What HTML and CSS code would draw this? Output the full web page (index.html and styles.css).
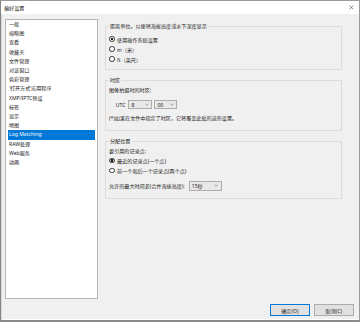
FILE: index.html
```html
<!DOCTYPE html>
<html lang="zh-CN">

<head>
    <meta charset="utf-8">
    <title>偏好设置</title>
    <link rel="stylesheet" href="styles.css">
</head>

<body>
    <div class="dialog">
        <div class="titlebar">
            <span class="title">偏好设置</span>
            <svg class="close" width="5" height="5" viewBox="0 0 5 5">
                <path d="M0.6 0.6L4.4 4.4M4.4 0.6L0.6 4.4" stroke="#444" stroke-width="0.6" fill="none" />
            </svg>
        </div>

        <div class="main">
            <ul class="nav">
                <li>一般</li>
                <li>缩略图</li>
                <li>查看</li>
                <li>收藏夹</li>
                <li>文件管理</li>
                <li>对该窗口</li>
                <li>色彩管理</li>
                <li>‘打开方式’应用程序</li>
                <li>XMP/IPTC预设</li>
                <li>标签</li>
                <li>显示</li>
                <li>地图</li>
                <li class="valgt">Log Matching</li>
                <li>RAW处理</li>
                <li>Web服务</li>
                <li>动画</li>
            </ul>

            <div class="panel">
                <fieldset class="group g1">
                    <legend>距离单位。以便将海拔高度或水下深度显示</legend>
                    <div class="radio"><span class="dot on"></span>使用操作系统设置</div>
                    <div class="radio"><span class="dot"></span>m（米）</div>
                    <div class="radio"><span class="dot"></span>ft（英尺）</div>
                </fieldset>

                <fieldset class="group g2">
                    <legend>时区</legend>
                    <div class="row">图像拍摄时的时区:</div>
                    <div class="utc">
                        <span class="utc-label">UTC</span>
                        <div class="combo c-hour"><span>8</span><svg width="4" height="3" viewBox="0 0 4 3"><path d="M0.3 0.6L2 2.3L3.7 0.6" stroke="#555" stroke-width="0.5" fill="none" /></svg></div>
                        <div class="combo c-min"><span>00</span><svg width="4" height="3" viewBox="0 0 4 3"><path d="M0.3 0.6L2 2.3L3.7 0.6" stroke="#555" stroke-width="0.5" fill="none" /></svg></div>
                    </div>
                    <div class="row note">(*)如果在文件中指定了时区，它将覆盖此处的这些设置。</div>
                </fieldset>

                <fieldset class="group g3">
                    <legend>分配位置</legend>
                    <div class="row">要引用的记录点:</div>
                    <div class="radio"><span class="dot on"></span>最近的记录点(一个点)</div>
                    <div class="radio"><span class="dot"></span>前一个和后一个记录点(两个点)</div>
                    <div class="wait">
                        <span>允许的最大时间差(合并海拔高度):</span>
                        <div class="combo c-sec"><span>15秒</span><svg width="4" height="3" viewBox="0 0 4 3"><path d="M0.3 0.6L2 2.3L3.7 0.6" stroke="#555" stroke-width="0.5" fill="none" /></svg></div>
                    </div>
                </fieldset>
            </div>
        </div>

        <div class="buttons">
            <button class="btn default">确定(O)</button>
            <button class="btn">取消(C)</button>
        </div>
    </div>
</body>

</html>
```

FILE: styles.css
```css
* {
    margin: 0;
    padding: 0;
    box-sizing: border-box;
}

body {
    background-color: #f0f0f0;
    font-family: "Noto Sans", "Noto Sans CJK SC", sans-serif;
    font-size: 5.1px;
    color: #1a1a1a;
}

.dialog {
    width: 360px;
    height: 322px;
    display: flex;
    flex-direction: column;
    background-color: #f0f0f0;
    border-top: 1px solid #9a9a9a;
    border-left: 1px solid #858585;
    border-right: 1px solid #9a9a9a;
    border-bottom: 2px solid #8a8a8a;
    box-shadow: inset 1px 0 #d8d8d8, inset 0 -1px #ffffff;
}

.titlebar {
    height: 13px;
    background-color: #ffffff;
    display: flex;
    align-items: center;
    justify-content: space-between;
    padding-left: 3px;
    padding-right: 5px;
}

.close {
    display: block;
}

.main {
    display: flex;
    padding: 5px 0 0 4px;
    height: 285px;
}

.nav {
    list-style: none;
    width: 93px;
    height: 280px;
    background-color: #ffffff;
    border: 1px solid #b4b4b4;
    line-height: 9.2px;
}

.nav li {
    margin: 0 2px;
    padding: 0 1px;
    white-space: nowrap;
}

.valgt {
    background-color: #0078d7;
    color: #ffffff;
}

.panel {
    width: 237px;
    margin-left: 7px;
    padding-top: 4px;
}

.group {
    border: 1px solid #dcdcdc;
    padding: 0 3px;
}

.group legend {
    line-height: 6px;
    padding: 0 1px;
}

.g1 {
    padding-top: 5px;
    padding-bottom: 5px;
}

.g2 {
    margin-top: 7px;
    padding-top: 3px;
    padding-bottom: 7px;
}

.g3 {
    margin-top: 7px;
    padding-top: 2.5px;
    padding-bottom: 7px;
}

.radio {
    display: flex;
    align-items: center;
    gap: 2.5px;
    height: 10px;
}

.dot {
    width: 5.6px;
    height: 5.6px;
    border: 0.7px solid #333333;
    border-radius: 50%;
    background-color: #ffffff;
}

.dot.on {
    background: radial-gradient(circle, #222222 0 1.3px, #ffffff 1.6px);
}

.row {
    line-height: 9px;
}

.utc {
    display: flex;
    align-items: center;
    height: 9px;
    margin-top: 5px;
    padding-left: 6.7px;
}

.utc-label {
    margin-right: 3px;
}

.combo {
    display: flex;
    align-items: center;
    justify-content: space-between;
    height: 9px;
    padding: 0 2.5px 0 2px;
    border: 1px solid #adadad;
    background-color: #e8e8e8;
}

.combo svg {
    display: block;
}

.c-hour {
    width: 24px;
}

.c-min {
    width: 23px;
    margin-left: 2px;
}

.note {
    margin-top: 5px;
}

.wait {
    display: flex;
    align-items: center;
    gap: 4px;
    height: 10px;
    margin-top: 5px;
}

.c-sec {
    width: 33px;
    height: 10px;
}

.buttons {
    display: flex;
    justify-content: flex-end;
    gap: 3.6px;
    padding: 5px 5px 0 0;
}

.btn {
    width: 40.4px;
    height: 12px;
    font-family: "Noto Sans", "Noto Sans CJK SC", sans-serif;
    font-size: 5.1px;
    color: #1a1a1a;
    background-color: #e1e1e1;
    border: 1px solid #adadad;
}

.default {
    border-color: #0078d7;
}
```
